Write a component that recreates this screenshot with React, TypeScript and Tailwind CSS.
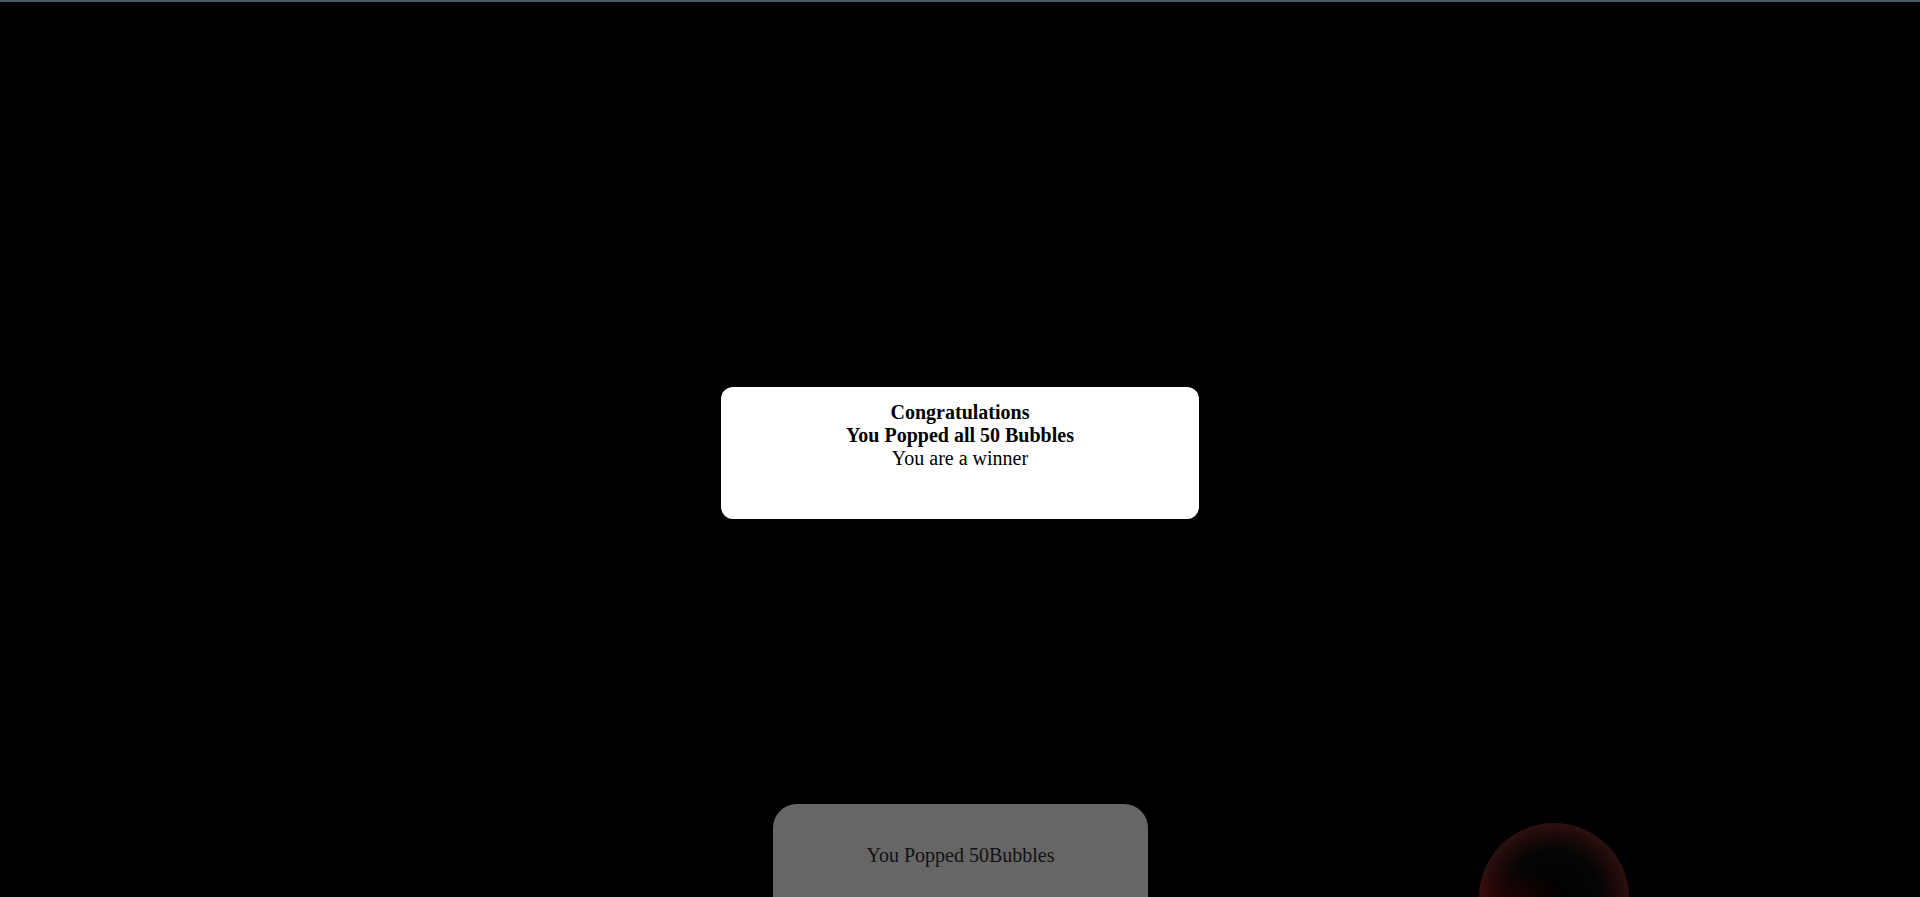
export default function App() {
  return (
    <div className="relative h-[897px] w-full overflow-hidden border-t-2 border-[#4b5b66] bg-black font-['Liberation_Serif','Times_New_Roman',serif]">
      {/* Winner modal */}
      <div className="absolute left-[721px] top-[385px] h-[132px] w-[478px] rounded-xl bg-white pt-[14px] text-center text-[20px] leading-[23px] text-black">
        <p className="font-bold">Congratulations</p>
        <p className="font-bold">You Popped all 50 Bubbles</p>
        <p>You are a winner</p>
      </div>

      {/* Score panel */}
      <div className="absolute left-[773px] top-[802px] h-[140px] w-[375px] rounded-[24px] bg-[#666666] pt-[40px] text-center text-[20px] leading-[23px] text-[#111111]">
        You Popped 50Bubbles
      </div>

      {/* Bubble */}
      <div className="absolute left-[1479px] top-[821px] h-[150px] w-[150px] rounded-full bg-[radial-gradient(circle_at_50%_50%,#000000_0%,#050505_45%,#200a0a_62%,#451b1b_85%,#552222_100%)]">
        <div className="h-full w-full rounded-full bg-[radial-gradient(circle_at_15%_80%,rgba(150,0,0,0.6)_0%,rgba(110,0,0,0.25)_25%,rgba(0,0,0,0)_45%)]" />
      </div>
    </div>
  );
}
